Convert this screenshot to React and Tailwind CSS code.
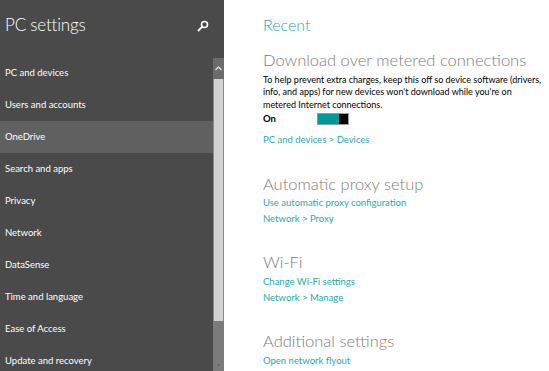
import React from 'react';

const nav = [
  'PC and devices',
  'Users and accounts',
  'OneDrive',
  'Search and apps',
  'Privacy',
  'Network',
  'DataSense',
  'Time and language',
  'Ease of Access',
  'Update and recovery',
];

function Section({ title, children, className = '' }) {
  return (
    <div className={className}>
      <h2 className="whitespace-nowrap text-[16.5px] font-light leading-[22px] text-[#7d7d7d]">{title}</h2>
      {children}
    </div>
  );
}

function Link({ children, className = '' }) {
  return (
    <div className={`whitespace-nowrap text-[9.5px] leading-[16px] text-[#1fabb0] ${className}`}>{children}</div>
  );
}

export default function App() {
  return (
    <div
      className="flex h-[371px] w-[549px] overflow-hidden bg-white"
      style={{ fontFamily: 'Lato, "Noto Sans", sans-serif' }}
    >
      <aside className="flex w-[224px] shrink-0 bg-[#4a4a4a]">
        <div className="w-[213px] shrink-0">
          <div className="flex h-[57px] items-start justify-between pl-[5px] pr-[4px] pt-[13px]">
            <h1 className="text-[17px] font-light leading-[24px] tracking-[-0.2px] text-white">PC settings</h1>
            <svg width="12" height="12" viewBox="0 0 12 12" className="mt-[7px]">
              <circle cx="7.5" cy="4.5" r="3" fill="none" stroke="white" strokeWidth="1.6" />
              <path d="M5.3 6.7 L1.5 10.5" stroke="white" strokeWidth="1.8" strokeLinecap="round" />
            </svg>
          </div>
          <nav>
            {nav.map((n) => (
              <div
                key={n}
                className={`flex h-[32px] items-center pl-[5px] pt-px text-[9.5px] text-white ${
                  n === 'OneDrive' ? 'bg-[#606060]' : ''
                }`}
              >
                {n}
              </div>
            ))}
          </nav>
        </div>
        <div className="mt-[58px] flex w-[11px] flex-col">
          <div className="flex h-[21px] items-center justify-center bg-[#6b6b6b]">
            <svg width="7" height="5" viewBox="0 0 7 5">
              <path d="M0.5 4 L3.5 1 L6.5 4" fill="none" stroke="#dcdcdc" strokeWidth="1.4" />
            </svg>
          </div>
          <div className="h-[242px] border-x border-[#8a8a8a] bg-[#d2d2d2]" />
          <div className="flex flex-1 items-end justify-center bg-[#7b7b7b] pb-[2px]">
            <span className="text-[6px] leading-[6px] text-[#444]">˅</span>
          </div>
        </div>
      </aside>

      <main className="min-w-0 flex-1 overflow-hidden pl-[39px] pt-[14px]">
        <h1 className="text-[16px] font-light leading-[22px] text-[#1fabb0]">Recent</h1>
        <Section title="Download over metered connections" className="mt-[13px]">
          <p className="mt-[2.5px] whitespace-nowrap text-[9px] leading-[12.5px] text-black">
            To help prevent extra charges, keep this off so device software (drivers,
            <br />
            info, and apps) for new devices won't download while you're on
            <br />
            metered Internet connections.
          </p>
          <div className="mt-px flex h-[14px] items-center">
            <span className="w-[54px] text-[9.5px] font-bold text-black">On</span>
            <div className="flex h-[12px] w-[32px] border border-[#9a9a9a]">
              <div className="flex-1 bg-[#00999a]" />
              <div className="w-[9px] bg-black" />
            </div>
          </div>
          <Link className="mt-[6px]">PC and devices &gt; Devices</Link>
        </Section>
        <Section title="Automatic proxy setup" className="mt-[25px]">
          <Link>Use automatic proxy configuration</Link>
          <Link>Network &gt; Proxy</Link>
        </Section>
        <Section title="Wi-Fi" className="mt-[24px]">
          <Link className="mt-px">Change Wi-Fi settings</Link>
          <Link>Network &gt; Manage</Link>
        </Section>
        <Section title="Additional settings" className="mt-[24px]">
          <Link className="mt-px">Open network flyout</Link>
        </Section>
      </main>
    </div>
  );
}
